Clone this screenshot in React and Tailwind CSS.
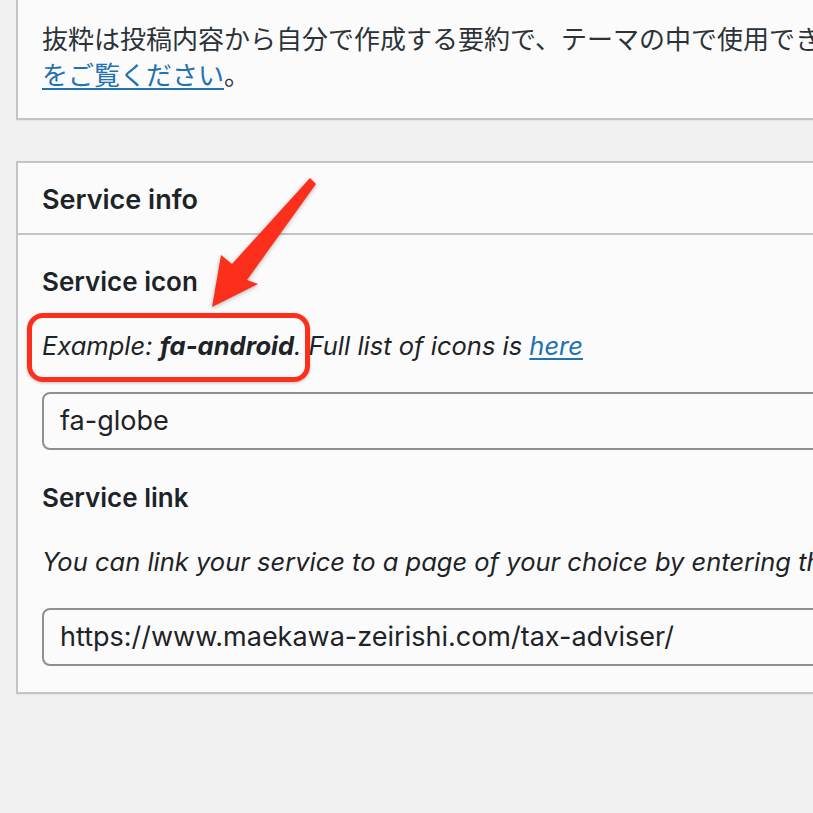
import React from 'react';

const latin = "font-['Inter','Noto_Sans_CJK_JP',sans-serif]";

function Field({ label, children }) {
    return (
        <div>
            <div className="text-[26px] leading-[36px] font-semibold text-[#1d2327]">{label}</div>
            {children}
        </div>
    );
}

export default function App() {
    return (
        <div className={`relative w-[813px] h-[813px] overflow-hidden bg-[#f0f0f1] ${latin}`}>
            {/* Excerpt box */}
            <div className="ml-[16px] w-[1100px] bg-[#fbfbfb] border-x-2 border-b-2 border-[#c3c4c7] shadow-[0_1px_1px_rgba(0,0,0,0.04)] pl-[24px] pt-[20px] pb-[26px]">
                <p className="text-[26px] leading-[36px] text-[#2c3338] whitespace-nowrap font-['Noto_Sans_CJK_JP',sans-serif]">
                    抜粋は投稿内容から自分で作成する要約で、テーマの中で使用できます。
                    <br />
                    <a href="#" className="text-[#2271b1] underline underline-offset-[3px] decoration-2">をご覧ください</a>。
                </p>
            </div>

            {/* Service info box */}
            <div className="mt-[41px] ml-[16px] w-[1100px] bg-[#fbfbfb] border-2 border-[#c3c4c7] shadow-[0_1px_1px_rgba(0,0,0,0.04)]">
                <div className="px-[24px] pt-[19px] pb-[15px] border-b-2 border-[#c3c4c7]">
                    <h2 className="text-[27px] leading-[36px] font-semibold text-[#1d2327]">Service info</h2>
                </div>

                <div className="pl-[24px] pr-[24px] pt-[29px] pb-[26px] flex flex-col gap-[30px]">
                    <Field label="Service icon">
                        <p className="mt-[28px] text-[25.5px] leading-[36px] italic text-[#1d2327] whitespace-nowrap">
                            Example: <b className="font-bold">fa-android</b>. Full list of icons is{' '}
                            <a href="#" className="text-[#2271b1] underline underline-offset-[3px] decoration-2">here</a>
                        </p>
                        <div className="mt-[28px] h-[58px] border-2 border-[#8c8f94] rounded-[8px] bg-[#fbfbfb] flex items-center px-[16px] text-[27px] text-[#1d2327]">
                            fa-globe
                        </div>
                    </Field>

                    <Field label="Service link">
                        <p className="mt-[28px] text-[25.5px] leading-[36px] italic text-[#1d2327] whitespace-nowrap">
                            You can link your service to a page of your choice by entering the URL here.
                        </p>
                        <div className="mt-[28px] h-[58px] border-2 border-[#8c8f94] rounded-[8px] bg-[#fbfbfb] flex items-center px-[16px] text-[27px] text-[#1d2327]">
                            https://www.maekawa-zeirishi.com/tax-adviser/
                        </div>
                    </Field>
                </div>
            </div>

            {/* Annotation: red box */}
            <div className="absolute left-[27px] top-[313px] w-[283px] h-[69px] border-[5px] border-[#fb2f1b] rounded-[16px] shadow-[0_1px_3px_rgba(0,0,0,0.25)]" />

            {/* Annotation: arrow */}
            <svg className="absolute left-0 top-0" width="813" height="813" viewBox="0 0 813 813">
                <polygon
                    points="212,307 221,255 232,264 310,178 316,184 247,280 258,284"
                    fill="#fb2f1b"
                    style={{ filter: 'drop-shadow(0 1px 2px rgba(0,0,0,0.3))' }}
                />
            </svg>
        </div>
    );
}
